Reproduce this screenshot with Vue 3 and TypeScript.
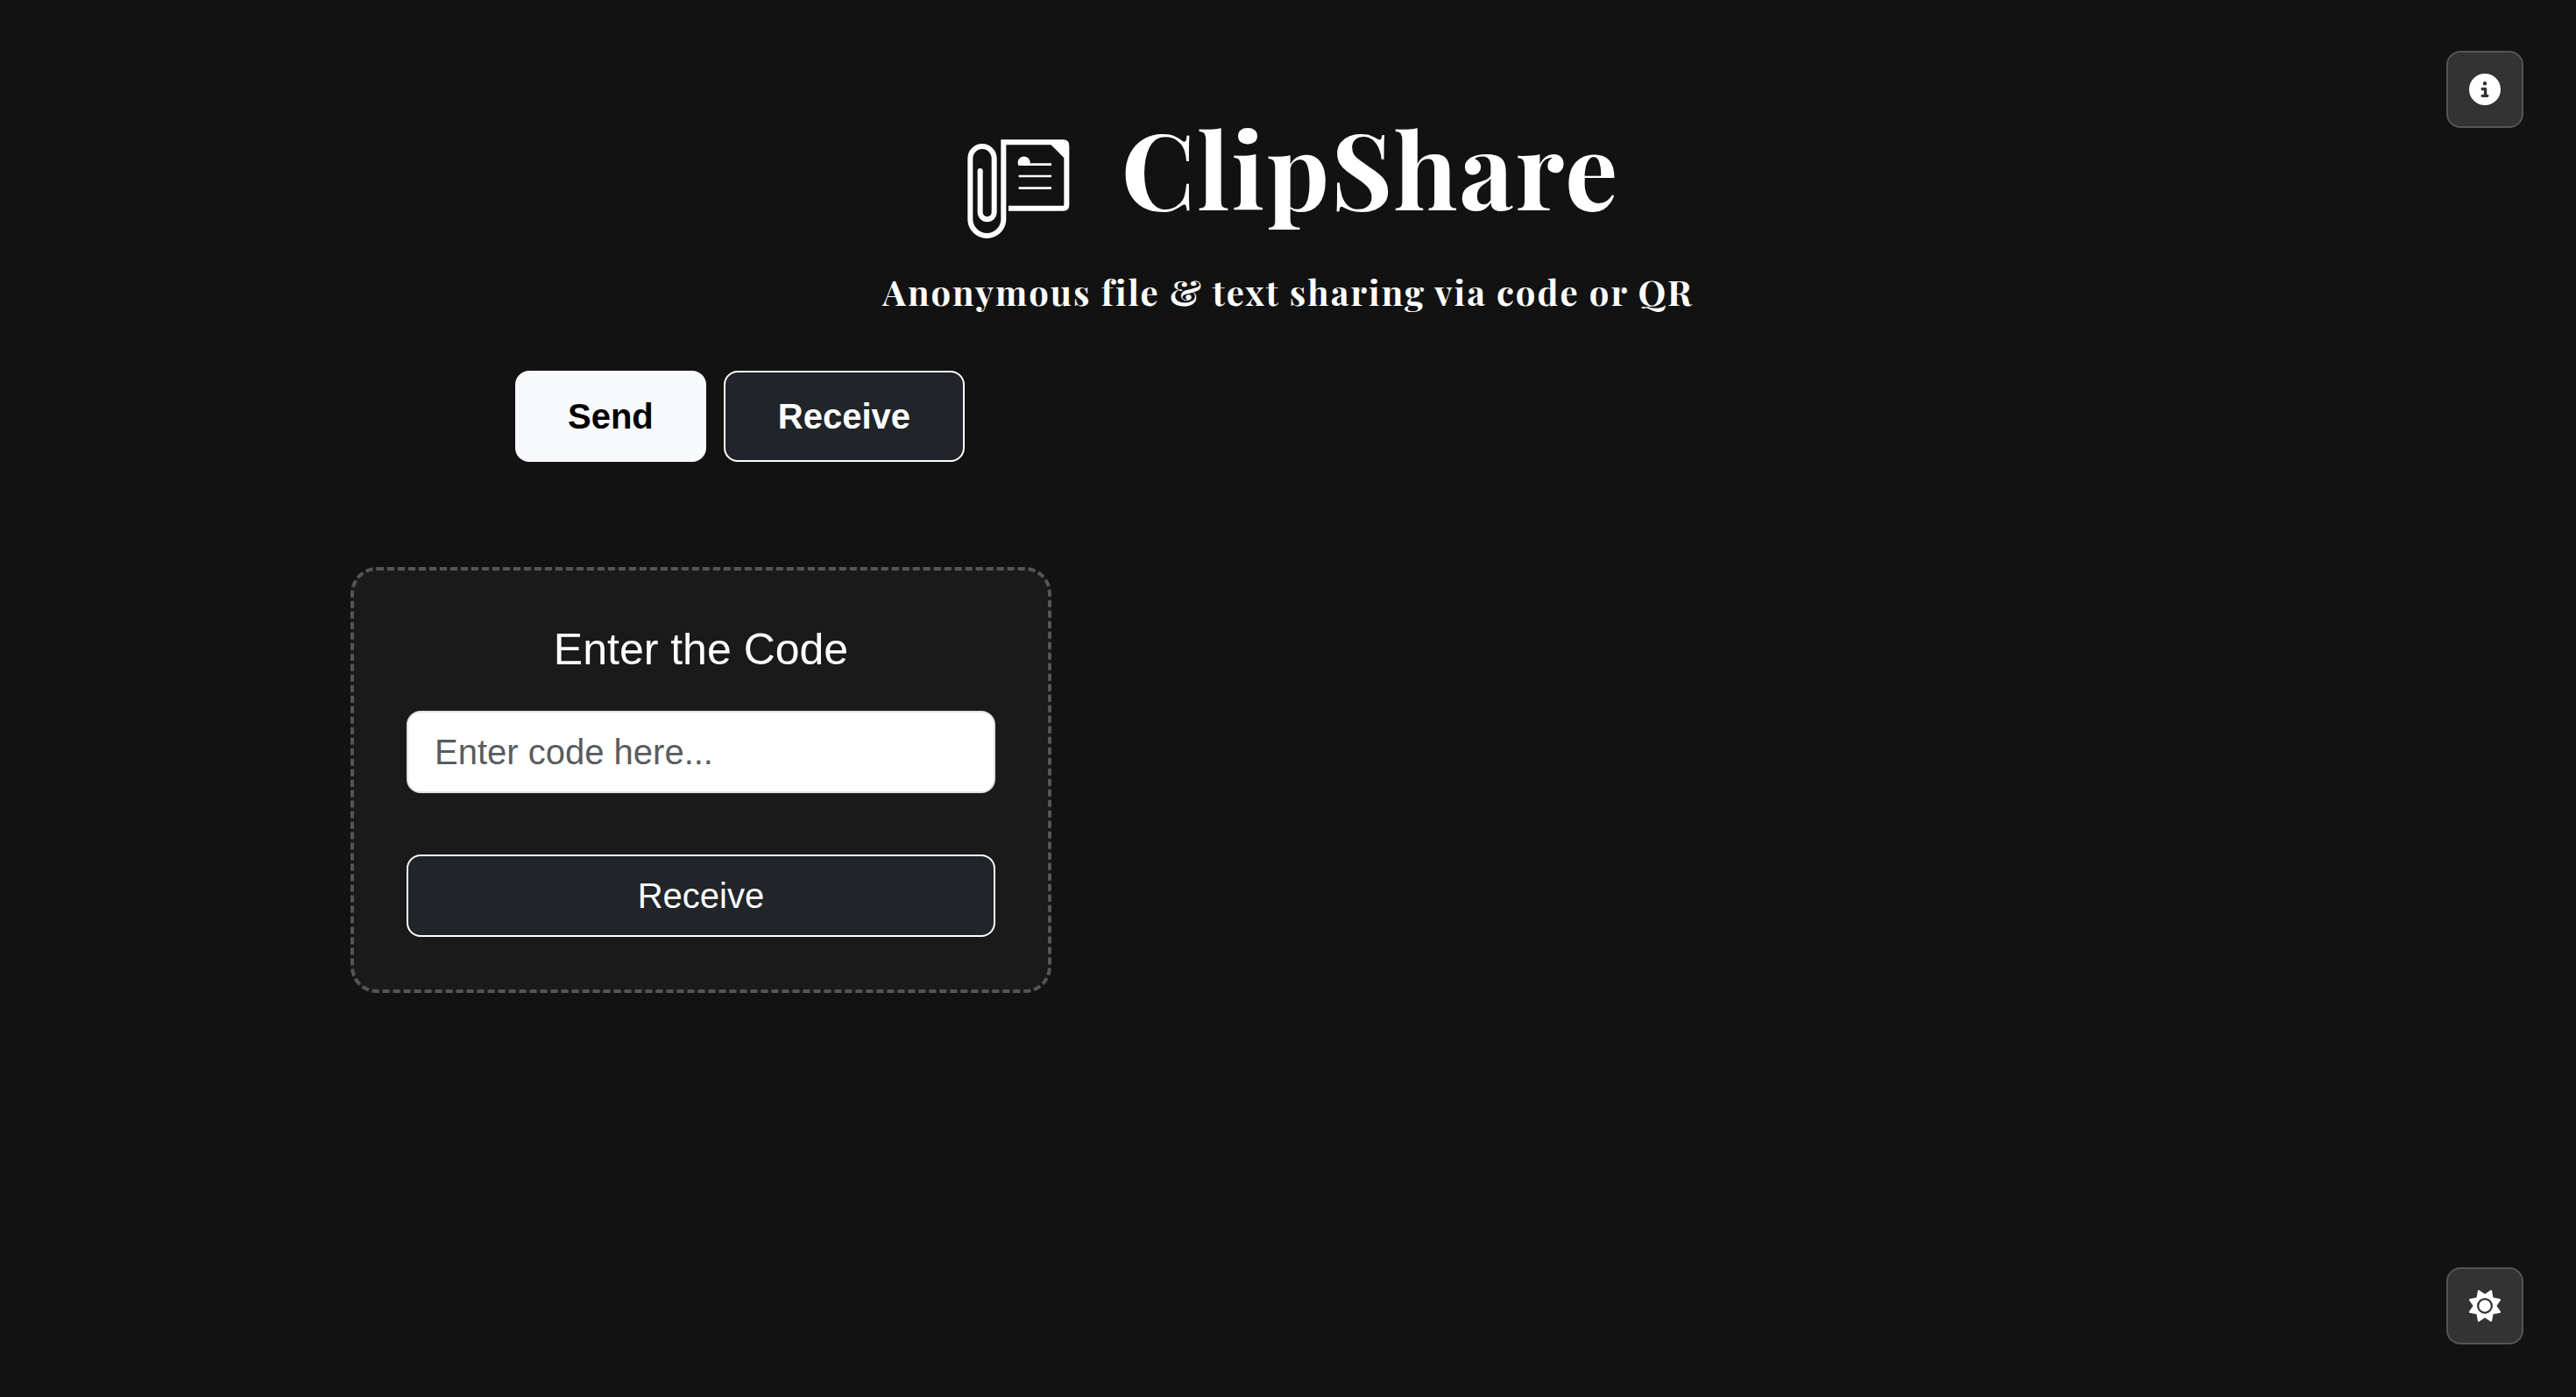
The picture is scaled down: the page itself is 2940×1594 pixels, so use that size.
<script setup lang="ts">
import { ref } from 'vue'

type Mode = 'send' | 'receive'

const mode = ref<Mode>('receive')
const code = ref('')
</script>

<template>
  <div class="page">
    <button class="tool tool-info" type="button" aria-label="About">
      <svg viewBox="0 0 512 512" aria-hidden="true">
        <path d="M256 512A256 256 0 1 0 256 0a256 256 0 1 0 0 512zM216 336h24V272H216c-13.3 0-24-10.7-24-24s10.7-24 24-24h48c13.3 0 24 10.7 24 24v88h8c13.3 0 24 10.7 24 24s-10.7 24-24 24H216c-13.3 0-24-10.7-24-24s10.7-24 24-24zm40-208a32 32 0 1 1 0 64 32 32 0 1 1 0-64z" />
      </svg>
    </button>

    <header class="header">
      <div class="brand">
        <svg class="logo" viewBox="36 87 420 342" aria-hidden="true">
          <g fill="none" stroke="#fff" stroke-width="18">
            <path d="M213 323H400Q412 323 412 311V109Q412 97 400 97H196V360A57 57 0 0 1 82 360V152A41 41 0 0 1 164 152V337A24 24 0 0 1 116 337V195" />
            <path d="M248 173H360M248 213H360M248 254H360" stroke-width="8" />
          </g>
          <circle cx="116" cy="195" r="9" fill="#fff" />
          <path d="M358 105H405V152Z" fill="#fff" />
          <path d="M248 177A21 21 0 1 1 284 177Z" fill="#fff" />
        </svg>
        <h1>ClipShare</h1>
      </div>
      <p class="tagline">Anonymous file &amp; text sharing via code or QR</p>
    </header>

    <main class="content">
      <nav class="tabs" aria-label="Mode">
        <button class="tab tab-light" type="button" @click="mode = 'send'">Send</button>
        <button class="tab tab-dark" type="button" @click="mode = 'receive'">Receive</button>
      </nav>

      <form class="card" @submit.prevent>
        <label for="code">Enter the Code</label>
        <input id="code" v-model="code" type="text" placeholder="Enter code here..." autocomplete="off" />
        <button class="submit" type="submit">Receive</button>
      </form>
    </main>

    <button class="tool tool-theme" type="button" aria-label="Toggle theme">
      <svg viewBox="0 0 512 512" aria-hidden="true">
        <path d="M361.5 1.2c5 2.1 8.6 6.6 9.6 11.9L391 121l107.9 19.8c5.3 1 9.8 4.6 11.9 9.6s1.5 10.7-1.6 15.2L446.9 256l62.3 90.3c3.1 4.5 3.7 10.2 1.6 15.2s-6.6 8.6-11.9 9.6L391 391 371.1 498.9c-1 5.3-4.6 9.8-9.6 11.9s-10.7 1.5-15.2-1.6L256 446.9l-90.3 62.3c-4.5 3.1-10.2 3.7-15.2 1.6s-8.6-6.6-9.6-11.9L121 391 13.1 371.1c-5.3-1-9.8-4.6-11.9-9.6s-1.5-10.7 1.6-15.2L65.1 256 2.8 165.7c-3.1-4.5-3.7-10.2-1.6-15.2s6.6-8.6 11.9-9.6L121 121 140.9 13.1c1-5.3 4.6-9.8 9.6-11.9s10.7-1.5 15.2 1.6L256 65.1 346.3 2.8c4.5-3.1 10.2-3.7 15.2-1.6zM160 256a96 96 0 1 1 192 0 96 96 0 1 1 -192 0zm224 0a128 128 0 1 0 -256 0 128 128 0 1 0 256 0z" />
      </svg>
    </button>
  </div>
</template>

<style>
body {
  background: #121212;
}
</style>

<style scoped>
.page {
  box-sizing: border-box;
  min-height: 100vh;
  padding: 118px 60px 60px;
  background: #121212;
  color: #fff;
  font-family: "Liberation Sans", Arial, sans-serif;
}

button,
input {
  box-sizing: border-box;
  font: inherit;
}

button {
  cursor: pointer;
}

.header {
  font-family: "Playfair Display", "Liberation Serif", serif;
  font-weight: 700;
  letter-spacing: 2px;
  text-align: center;
}

.brand {
  display: flex;
  align-items: flex-start;
  justify-content: center;
  gap: 48px;
}

.logo {
  width: 140px;
  height: 114px;
  margin-top: 41px;
}

h1 {
  margin: 0;
  font-size: 120px;
  line-height: 144px;
}

.tagline {
  margin: 32px 0 0;
  font-size: 40px;
  line-height: 56px;
}

.content {
  max-width: 2140px;
  margin: 62px auto 0;
}

.tabs {
  display: flex;
  gap: 20px;
  margin-left: 188px;
}

.tab {
  padding: 20px 60px;
  border: 0;
  border-radius: 16px;
  font-size: 40px;
  font-weight: 700;
  line-height: 60px;
}

.tab-light {
  background: #f8f9fc;
  color: #000;
}

.tab-dark {
  border: 2px solid #fff;
  background: #212529;
  color: #fff;
}

.card {
  box-sizing: border-box;
  display: flex;
  flex-direction: column;
  max-width: 800px;
  margin-top: 120px;
  padding: 60px;
  border: 4px dashed #555;
  border-radius: 30px;
  background: #1a1a1a;
}

.card label {
  font-size: 50px;
  line-height: 60px;
  text-align: center;
}

.card input {
  margin-top: 40px;
  padding: 15px 30px;
  border: 2px solid #dee2e6;
  border-radius: 16px;
  background: #fff;
  color: #212529;
  font-size: 40px;
  line-height: 60px;
}

.card input::placeholder {
  color: #595c5f;
  opacity: 1;
}

.submit {
  margin-top: 70px;
  padding: 15px 30px;
  border: 2px solid #fff;
  border-radius: 16px;
  background: #212529;
  color: #fff;
  font-size: 40px;
  line-height: 60px;
}

.tool {
  position: fixed;
  right: 60px;
  display: flex;
  align-items: center;
  justify-content: center;
  width: 88px;
  height: 88px;
  padding: 0;
  border: 2px solid #555;
  border-radius: 16px;
  background: #333;
}

.tool-info {
  top: 58px;
}

.tool-theme {
  bottom: 60px;
}

.tool svg {
  width: 36px;
  height: 36px;
  fill: #fff;
}
</style>
